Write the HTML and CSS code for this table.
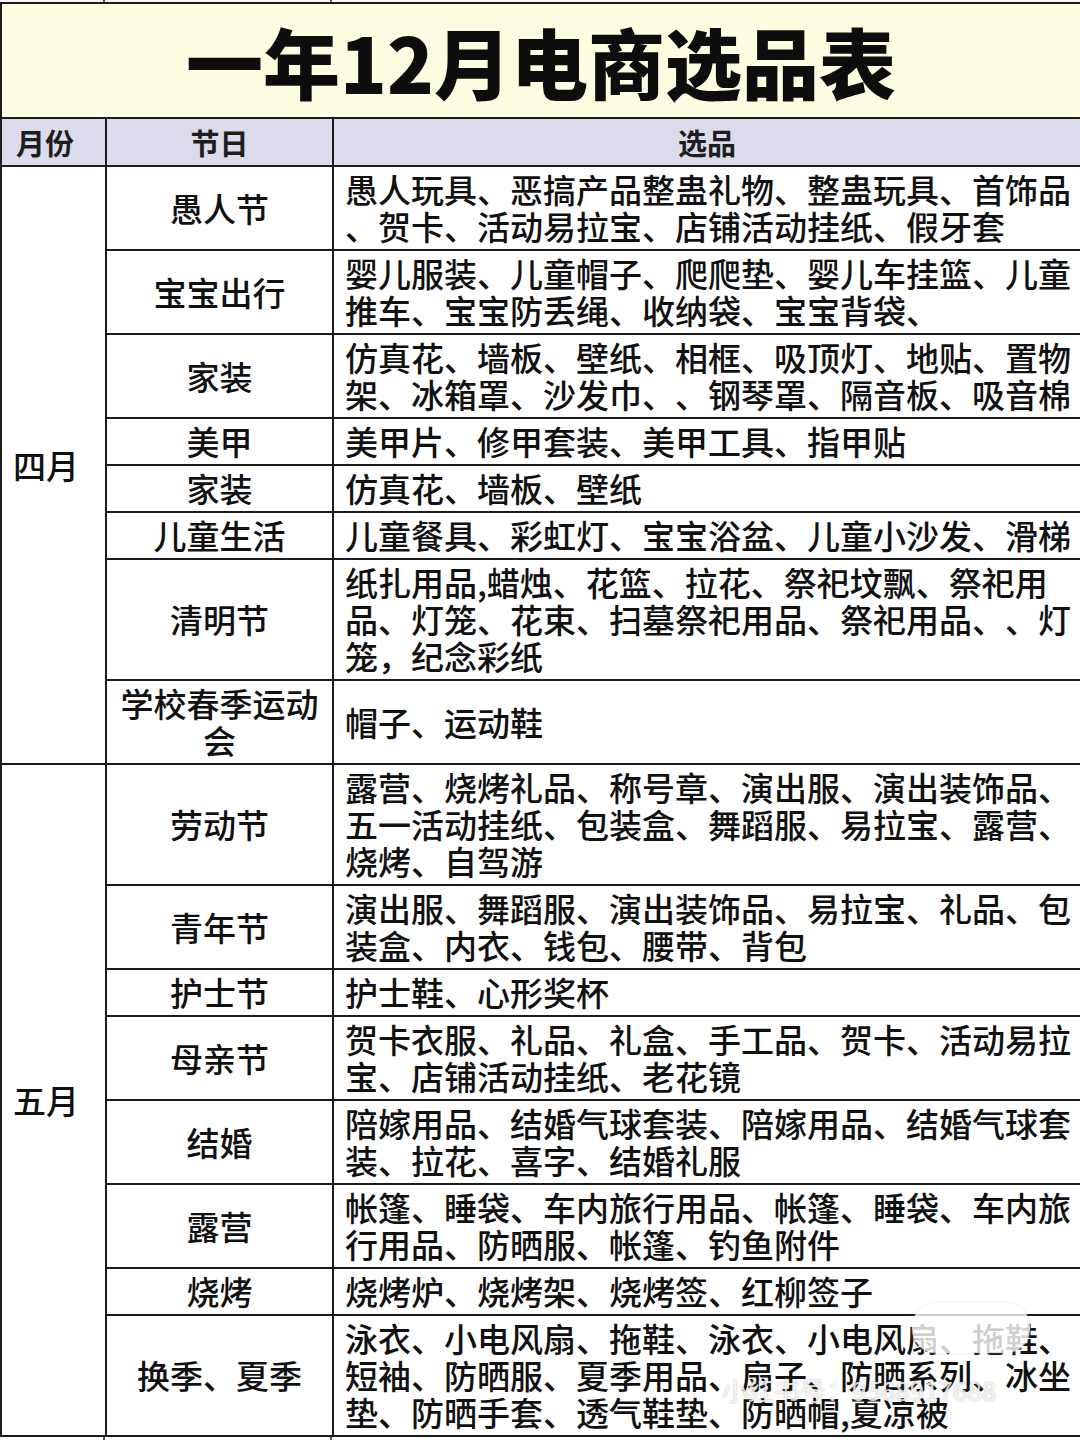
FILE: index.html
```html
<!DOCTYPE html>
<html lang="zh-CN">
<head>
<meta charset="utf-8">
<title>一年12月电商选品表</title>
<link rel="stylesheet" href="styles.css">
</head>
<body>
<div class="page">
  <div class="topstrip"><span class="ts1"></span><span class="ts2"></span><span class="ts3"></span></div>
  <table class="sheet">
    <colgroup><col class="c1"><col class="c2"><col class="c3"></colgroup>
    <tr class="title-row"><td colspan="3" class="title">一年12月电商选品表</td></tr>
    <tr class="head-row">
      <th class="h-month">月份</th>
      <th class="h-fest">节日</th>
      <th class="h-items">选品</th>
    </tr>
    <tr>
      <td class="month" rowspan="8">四月</td>
      <td class="fest">愚人节</td>
      <td class="items">愚人玩具、恶搞产品整蛊礼物、整蛊玩具、首饰品<br>、贺卡、活动易拉宝、店铺活动挂纸、假牙套</td>
    </tr>
    <tr>
      <td class="fest">宝宝出行</td>
      <td class="items">婴儿服装、儿童帽子、爬爬垫、婴儿车挂篮、儿童<br>推车、宝宝防丢绳、收纳袋、宝宝背袋、</td>
    </tr>
    <tr>
      <td class="fest">家装</td>
      <td class="items">仿真花、墙板、壁纸、相框、吸顶灯、地贴、置物<br>架、冰箱罩、沙发巾、、钢琴罩、隔音板、吸音棉</td>
    </tr>
    <tr>
      <td class="fest">美甲</td>
      <td class="items">美甲片、修甲套装、美甲工具、指甲贴</td>
    </tr>
    <tr>
      <td class="fest">家装</td>
      <td class="items">仿真花、墙板、壁纸</td>
    </tr>
    <tr>
      <td class="fest">儿童生活</td>
      <td class="items">儿童餐具、彩虹灯、宝宝浴盆、儿童小沙发、滑梯</td>
    </tr>
    <tr>
      <td class="fest">清明节</td>
      <td class="items">纸扎用品,蜡烛、花篮、拉花、祭祀坟飘、祭祀用<br>品、灯笼、花束、扫墓祭祀用品、祭祀用品、、灯<br>笼，纪念彩纸</td>
    </tr>
    <tr>
      <td class="fest">学校春季运动<br>会</td>
      <td class="items">帽子、运动鞋</td>
    </tr>
    <tr>
      <td class="month" rowspan="9">五月</td>
      <td class="fest">劳动节</td>
      <td class="items">露营、烧烤礼品、称号章、演出服、演出装饰品、<br>五一活动挂纸、包装盒、舞蹈服、易拉宝、露营、<br>烧烤、自驾游</td>
    </tr>
    <tr>
      <td class="fest">青年节</td>
      <td class="items">演出服、舞蹈服、演出装饰品、易拉宝、礼品、包<br>装盒、内衣、钱包、腰带、背包</td>
    </tr>
    <tr>
      <td class="fest">护士节</td>
      <td class="items">护士鞋、心形奖杯</td>
    </tr>
    <tr>
      <td class="fest">母亲节</td>
      <td class="items">贺卡衣服、礼品、礼盒、手工品、贺卡、活动易拉<br>宝、店铺活动挂纸、老花镜</td>
    </tr>
    <tr>
      <td class="fest">结婚</td>
      <td class="items">陪嫁用品、结婚气球套装、陪嫁用品、结婚气球套<br>装、拉花、喜字、结婚礼服</td>
    </tr>
    <tr>
      <td class="fest">露营</td>
      <td class="items">帐篷、睡袋、车内旅行用品、帐篷、睡袋、车内旅<br>行用品、防晒服、帐篷、钓鱼附件</td>
    </tr>
    <tr>
      <td class="fest">烧烤</td>
      <td class="items">烧烤炉、烧烤架、烧烤签、红柳签子</td>
    </tr>
    <tr>
      <td class="fest">换季、夏季</td>
      <td class="items">泳衣、小电风扇、拖鞋、泳衣、小电风扇、拖鞋、<br>短袖、防晒服、夏季用品、扇子、防晒系列、冰坐<br>垫、防晒手套、透气鞋垫、防晒帽,夏凉被</td>
    </tr>
  </table>
  <div class="bottomstrip"><span class="ts1"></span><span class="ts2"></span><span class="ts3"></span></div>
  <div class="wm-logo"></div>
  <div class="wm-text">小红书号：9568917688</div>
</div>
</body>
</html>
```

FILE: styles.css
```css
html, body {
  margin: 0;
  padding: 0;
  background: #ffffff;
}

body {
  font-family: "Noto Sans CJK SC", "Noto Sans", sans-serif;
  color: #111111;
  text-spacing-trim: space-all;
  font-kerning: none;
}

.page {
  position: relative;
  width: 1080px;
  height: 1440px;
  overflow: hidden;
}

.topstrip,
.bottomstrip {
  display: flex;
  height: 2px;
  background: #f4f4f4;
}

.bottomstrip {
  height: 6px;
  background: #ffffff;
}

.ts1 {
  width: 103px;
  border-right: 2px solid #555;
}

.ts2 {
  width: 225px;
  border-right: 2px solid #555;
}

.ts3 {
  flex: 1;
}

.sheet {
  width: 1080px;
  table-layout: fixed;
  border-collapse: collapse;
}

.c1 { width: 105px; }
.c2 { width: 227px; }
.c3 { width: 748px; }

.sheet td,
.sheet th {
  border: 2px solid #1c1c1c;
  padding: 4px 0;
  font-size: 33px;
  line-height: 37px;
  font-weight: 500;
  vertical-align: middle;
}

.title-row .title {
  height: 113px;
  padding: 0;
  background: #fdfde1;
  text-align: center;
  font-size: 77px;
  line-height: 113px;
  font-weight: 900;
  color: #0d0d0d;
}

.head-row th {
  background: #dcdbeb;
  font-size: 29px;
  line-height: 38px;
  font-weight: 700;
  color: #1e1e1e;
}

.h-month {
  text-align: left;
  padding-left: 14px !important;
}

.h-fest,
.h-items {
  text-align: center;
}

.month {
  text-align: left;
  padding-left: 11px !important;
}

.fest {
  text-align: center;
}

.items {
  text-align: left;
  padding-left: 11px !important;
  white-space: nowrap;
}

.wm-logo {
  position: absolute;
  left: 912px;
  top: 1303px;
  width: 118px;
  height: 50px;
  border-radius: 24px;
  background: rgba(255, 255, 255, 0.8);
  box-shadow: 0 0 3px rgba(200, 200, 200, 0.5);
}

.wm-text {
  position: absolute;
  left: 722px;
  top: 1373px;
  font-size: 26px;
  line-height: 34px;
  color: rgba(255, 255, 255, 0.8);
  text-shadow: 0 0 2px rgba(90, 90, 90, 0.45);
  white-space: nowrap;
}
```
